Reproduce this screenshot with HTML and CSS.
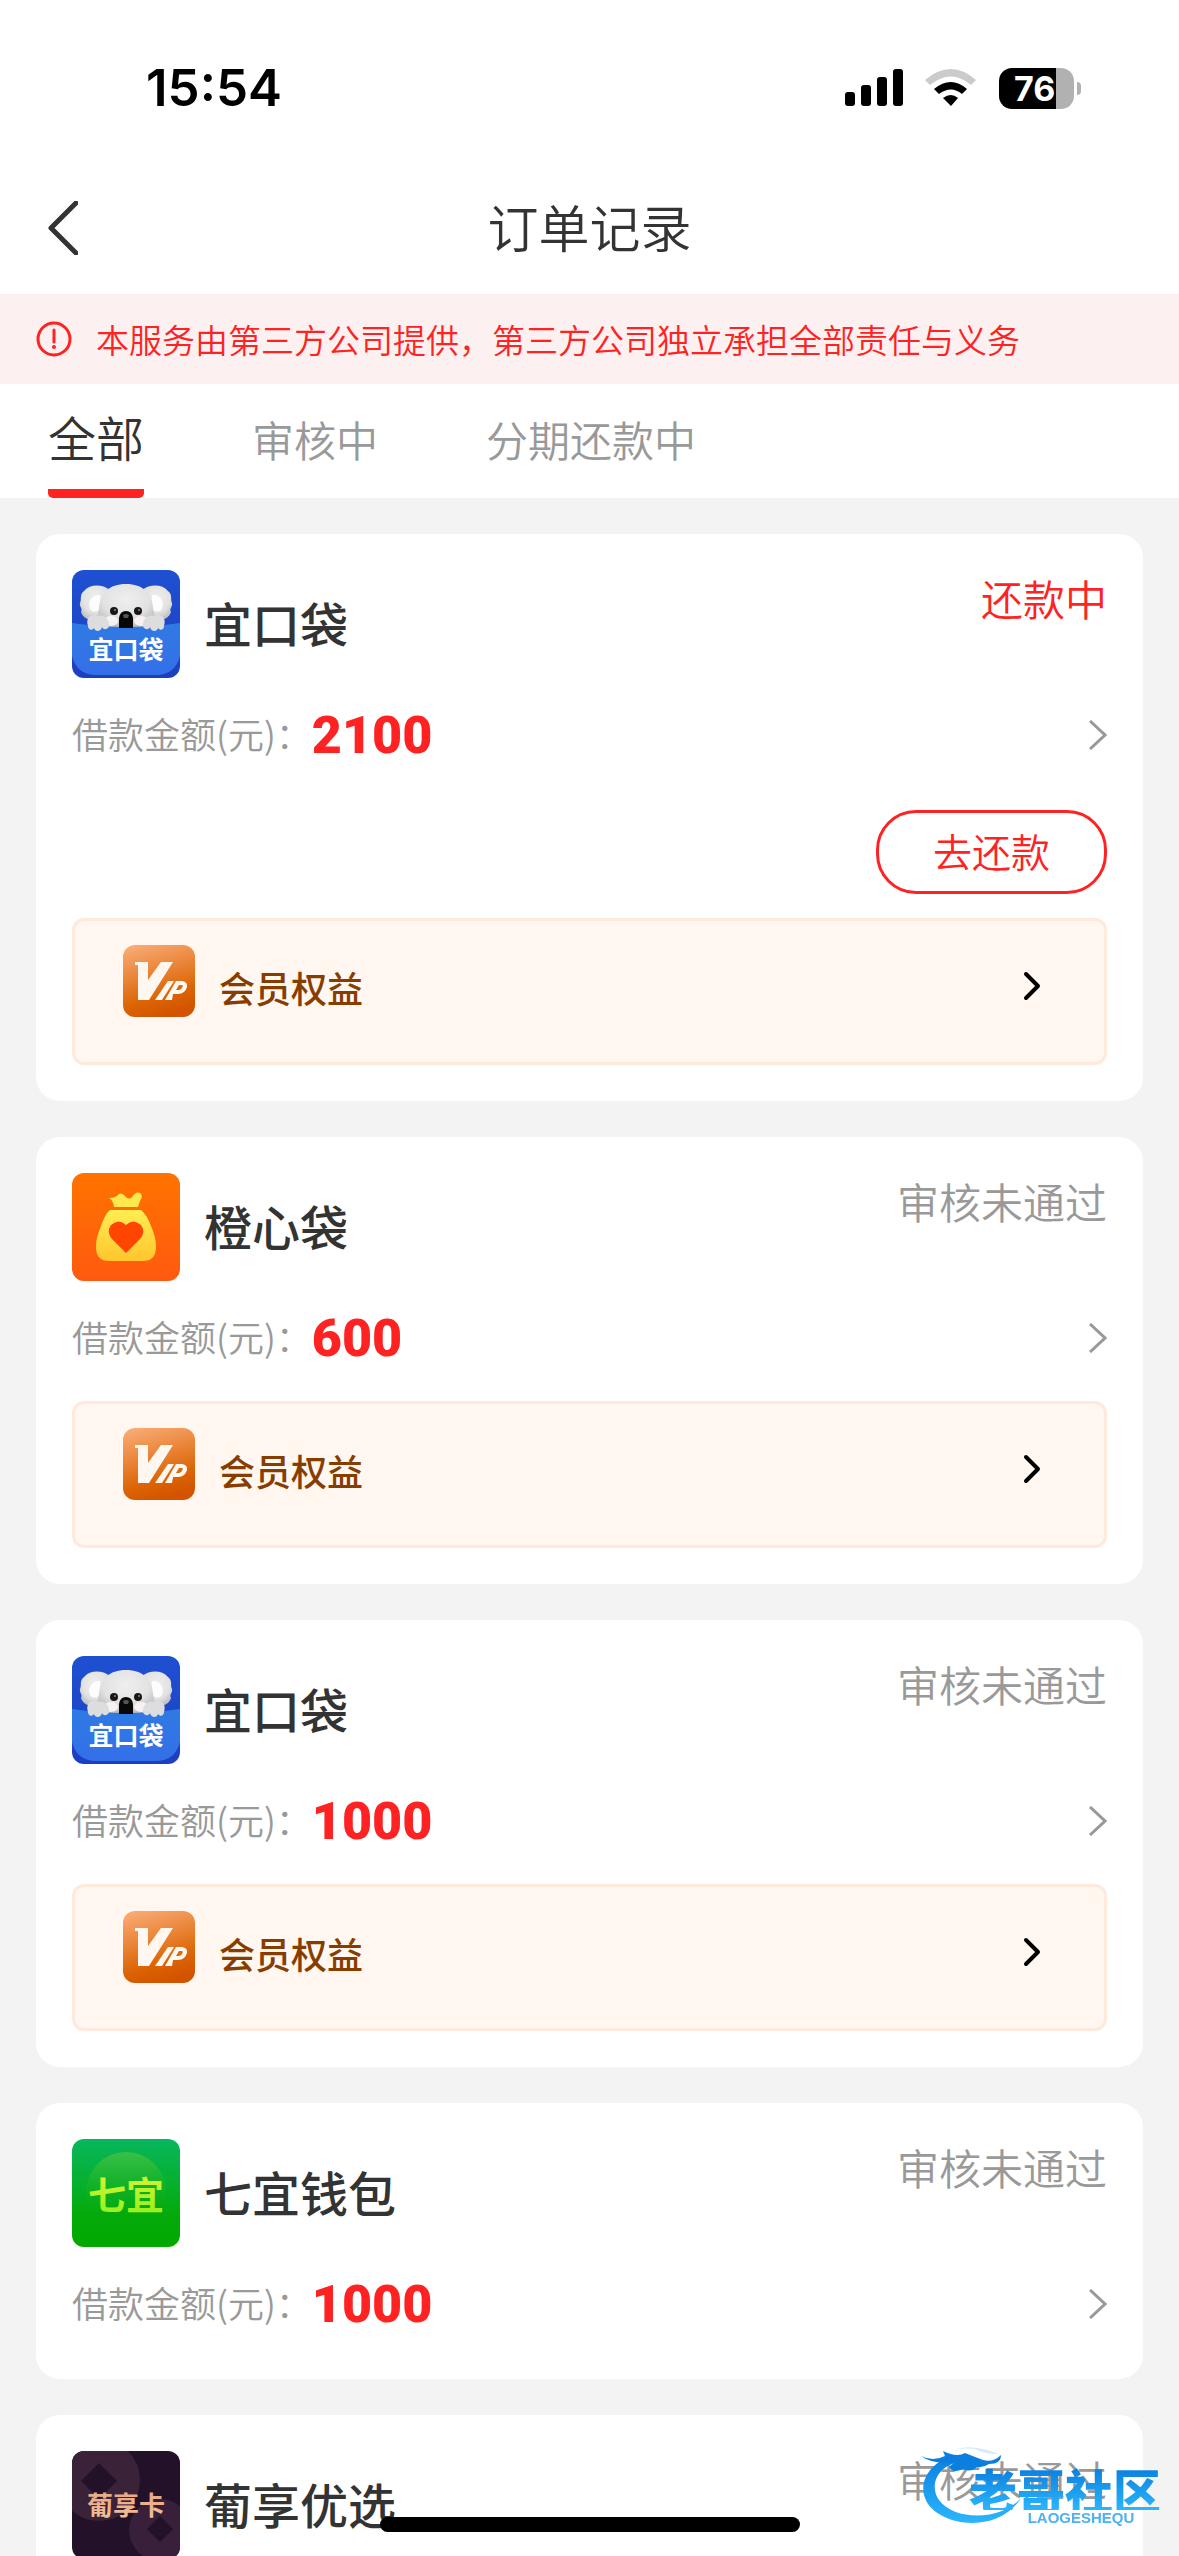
FILE: index.html
```html
<!DOCTYPE html>
<html lang="zh-CN">
<head>
    <meta charset="UTF-8">
    <meta name="viewport" content="width=device-width, initial-scale=1.0">
    <title>订单记录</title>
    <link rel="stylesheet" href="styles.css">
</head>
<body>

    <!-- Shared icons -->
    <svg class="sprite" width="0" height="0" aria-hidden="true">
        <defs>
            <linearGradient id="koalaBg" x1="0" y1="0" x2="0" y2="1">
                <stop offset="0" stop-color="#1f50d2"/>
                <stop offset="1" stop-color="#1c3fc0"/>
            </linearGradient>
            <linearGradient id="pocket" x1="0" y1="0" x2="0" y2="1">
                <stop offset="0" stop-color="#2f7ae4"/>
                <stop offset="1" stop-color="#346fe8"/>
            </linearGradient>
            <radialGradient id="fur" cx="0.5" cy="0.35" r="0.65">
                <stop offset="0" stop-color="#efefef"/>
                <stop offset="0.65" stop-color="#e2e2e2"/>
                <stop offset="1" stop-color="#bdbdbf"/>
            </radialGradient>
            <linearGradient id="vipBg" x1="0.2" y1="0" x2="0.5" y2="1">
                <stop offset="0" stop-color="#f9aa74"/>
                <stop offset="0.75" stop-color="#dc6403"/>
                <stop offset="1" stop-color="#d35400"/>
            </linearGradient>
            <linearGradient id="orangeBg" x1="0" y1="0" x2="0" y2="1">
                <stop offset="0" stop-color="#ff7300"/>
                <stop offset="1" stop-color="#ff5a10"/>
            </linearGradient>
            <linearGradient id="bag" x1="0" y1="0" x2="0" y2="1">
                <stop offset="0" stop-color="#ffee52"/>
                <stop offset="1" stop-color="#ffc52e"/>
            </linearGradient>
            <linearGradient id="greenBg" x1="0" y1="0" x2="0" y2="1">
                <stop offset="0" stop-color="#08b75e"/>
                <stop offset="0.7" stop-color="#04aa0a"/>
                <stop offset="1" stop-color="#03a800"/>
            </linearGradient>
            <linearGradient id="greenDisc" x1="0" y1="0" x2="0" y2="1">
                <stop offset="0" stop-color="#3bc047"/>
                <stop offset="0.8" stop-color="#08ab08" stop-opacity="0"/>
            </linearGradient>
            <linearGradient id="lime" x1="0" y1="0" x2="0" y2="1">
                <stop offset="0" stop-color="#e6f53a"/>
                <stop offset="1" stop-color="#8cf018"/>
            </linearGradient>
            <linearGradient id="gold" x1="0" y1="0" x2="0" y2="1">
                <stop offset="0" stop-color="#e5a183"/>
                <stop offset="1" stop-color="#f3c295"/>
            </linearGradient>
            <linearGradient id="brand" x1="0" y1="0" x2="0" y2="1">
                <stop offset="0" stop-color="#0a7fe0"/>
                <stop offset="1" stop-color="#2bb6fb"/>
            </linearGradient>
        </defs>

        <symbol id="logo-koala" viewBox="0 0 108 108">
            <rect width="108" height="108" fill="url(#koalaBg)"/>
            <g fill="url(#fur)">
                <path d="M38 20C30 14 18 14 12 21C7 25 10 29 8 33C7 37 11 38 9 42C11 49 20 52 30 50Z"/>
                <path d="M70 20C78 14 90 14 96 21C101 25 98 29 100 33C101 37 97 38 99 42C97 49 88 52 78 50Z"/>
            </g>
            <path d="M28 25C20 24 15 32 18 39C21 43 26 42 29 38ZM80 25C88 24 93 32 90 39C87 43 82 42 79 38Z" fill="#fdfdfd"/>
            <path d="M54 14C37 14 28 23 27 38C25 46 27 53 31 57H77C81 53 83 46 81 38C80 23 71 14 54 14Z" fill="url(#fur)"/>
            <ellipse cx="39" cy="51" rx="7" ry="5" fill="#f7f2ef"/>
            <ellipse cx="69" cy="51" rx="7" ry="5" fill="#f7f2ef"/>
            <path d="M0 53Q54 61 108 53V86Q103 105 84 105H24Q5 105 0 86Z" fill="url(#pocket)"/>
            <path d="M47 58V48Q48 41 54 41Q60 41 61 48V58Z" fill="#080808"/>
            <path d="M51 45Q54 43 57 45L56 48H52Z" fill="#555"/>
            <circle cx="42" cy="41" r="4" fill="#171717"/>
            <circle cx="66" cy="41" r="4" fill="#171717"/>
            <circle cx="43" cy="40" r="1" fill="#888"/>
            <circle cx="67" cy="40" r="1" fill="#888"/>
            <path d="M16 56C13 47 20 43 26 46C31 44 38 49 37 56C36 60 31 60 30 57C29 62 23 62 22 58C20 61 16 60 16 56Z" fill="#dddde0"/>
            <path d="M92 56C95 47 88 43 82 46C77 44 70 49 71 56C72 60 77 60 78 57C79 62 85 62 86 58C88 61 92 60 92 56Z" fill="#dddde0"/>
            <text x="54" y="89" text-anchor="middle" class="logo-text logo-text-koala">宜口袋</text>
        </symbol>

        <symbol id="logo-orange" viewBox="0 0 108 108">
            <rect width="108" height="108" fill="url(#orangeBg)"/>
            <path d="M37 25Q44 25 47 21Q50 19 54 24Q57 27 60 24Q64 18 68 20Q71 22 69 26Q67 30 66 34H42Q41 27 37 25Z" fill="#ffe84e"/>
            <path d="M38 37H69Q75 42 79 53Q84 64 84 74Q84 88 71 88H37Q24 88 24 74Q24 64 29 53Q33 41 38 37Z" fill="url(#bag)"/>
            <path d="M54 80L40 66Q34 59 39 52Q47 45 54 52Q61 45 69 52Q74 59 68 66Z" fill="#ff4500"/>
        </symbol>

        <symbol id="logo-green" viewBox="0 0 108 108">
            <rect width="108" height="108" fill="url(#greenBg)"/>
            <circle cx="54" cy="53" r="40" fill="url(#greenDisc)"/>
            <text x="54" y="70" text-anchor="middle" class="logo-text logo-text-green">七宜</text>
        </symbol>

        <symbol id="logo-grape" viewBox="0 0 108 108">
            <rect width="108" height="108" fill="#221129"/>
            <circle cx="27" cy="29" r="41" fill="#3a2239"/>
            <circle cx="88" cy="79" r="31" fill="#38203a"/>
            <path d="M27 12L45 30L27 48L9 30Z" fill="#221129"/>
            <path d="M88 65L101 78L88 91L75 78Z" fill="#221129"/>
            <text x="54" y="64" text-anchor="middle" class="logo-text logo-text-grape">葡享卡</text>
        </symbol>

        <symbol id="icon-vip" viewBox="0 0 72 72">
            <rect width="72" height="72" rx="12" fill="url(#vipBg)"/>
            <path d="M12 17H25V35L38 17H50L26 55H15V20H12Z" fill="#fff7f0"/>
            <path d="M45 36H51L39 55H32Z" fill="#fff7f0"/>
            <path fill-rule="evenodd" d="M53 36H59Q65 37 64 42Q62 49 55 49H50L49 55H42ZM56 40L53 45H56Q59 44 60 41Q60 40 58 40Z" fill="#fff7f0"/>
        </symbol>

        <symbol id="icon-arrow" viewBox="0 0 18 30">
            <path d="M1 1L16 15L1 29" fill="none" stroke="currentColor" stroke-width="3"/>
        </symbol>

        <symbol id="icon-arrow-bold" viewBox="0 0 18 30">
            <path d="M3 3L15 15L3 27" fill="none" stroke="currentColor" stroke-width="4" stroke-linecap="round" stroke-linejoin="round"/>
        </symbol>
    </svg>

    <div class="app">
        <div class="status-bar">
            <span class="time">15:54</span>
            <div class="status-icons">
                <svg width="58" height="38" viewBox="0 0 58 38">
                    <rect x="0" y="23" width="10" height="14" rx="3"/>
                    <rect x="16" y="16" width="10" height="21" rx="3"/>
                    <rect x="32" y="8" width="10" height="29" rx="3"/>
                    <rect x="48" y="0" width="10" height="37" rx="3"/>
                </svg>
                <svg width="52" height="38" viewBox="0 0 52 38">
                    <path d="M0 11Q26 -11 51 11L46 16Q26 -1 5 16Z" fill="#cbcbcb"/>
                    <path d="M9 20Q26 6 42 20L37 25Q26 16 14 25Z"/>
                    <path d="M18 29Q26 23 33 29L26 37Z"/>
                </svg>
                <div class="battery">
                    <span class="battery-level">76</span>
                    <span class="battery-tip"></span>
                </div>
            </div>
        </div>

        <header class="nav-bar">
            <button type="button" class="back-btn" aria-label="返回">
                <svg width="30" height="54" viewBox="0 0 30 54">
                    <path d="M28 2L3 27L28 52" fill="none" stroke="currentColor" stroke-width="5" stroke-linecap="round" stroke-linejoin="round"/>
                </svg>
            </button>
            <h1>订单记录</h1>
        </header>

        <div class="notice">
            <svg width="36" height="36" viewBox="0 0 36 36">
                <circle cx="18" cy="18" r="16" fill="none" stroke="currentColor" stroke-width="3"/>
                <path d="M18 9V21" stroke="currentColor" stroke-width="3" stroke-linecap="round"/>
                <circle cx="18" cy="26" r="2" fill="currentColor"/>
            </svg>
            <p>本服务由第三方公司提供，第三方公司独立承担全部责任与义务</p>
        </div>

        <nav class="tabs">
            <a href="#" class="tab active">全部</a>
            <a href="#" class="tab">审核中</a>
            <a href="#" class="tab">分期还款中</a>
        </nav>

        <main class="order-list">
            <section class="card">
                <div class="card-head">
                    <svg class="logo"><use href="#logo-koala"/></svg>
                    <h2>宜口袋</h2>
                    <span class="status repaying">还款中</span>
                </div>
                <div class="amount-row">
                    <span class="label">借款金额(元)：</span>
                    <strong class="amount">2100</strong>
                    <svg class="arrow"><use href="#icon-arrow"/></svg>
                </div>
                <div class="actions">
                    <button type="button" class="repay-btn">去还款</button>
                </div>
                <a href="#" class="vip">
                    <svg class="vip-icon"><use href="#icon-vip"/></svg>
                    <span>会员权益</span>
                    <svg class="arrow"><use href="#icon-arrow-bold"/></svg>
                </a>
            </section>

            <section class="card">
                <div class="card-head">
                    <svg class="logo"><use href="#logo-orange"/></svg>
                    <h2>橙心袋</h2>
                    <span class="status">审核未通过</span>
                </div>
                <div class="amount-row">
                    <span class="label">借款金额(元)：</span>
                    <strong class="amount">600</strong>
                    <svg class="arrow"><use href="#icon-arrow"/></svg>
                </div>
                <a href="#" class="vip">
                    <svg class="vip-icon"><use href="#icon-vip"/></svg>
                    <span>会员权益</span>
                    <svg class="arrow"><use href="#icon-arrow-bold"/></svg>
                </a>
            </section>

            <section class="card">
                <div class="card-head">
                    <svg class="logo"><use href="#logo-koala"/></svg>
                    <h2>宜口袋</h2>
                    <span class="status">审核未通过</span>
                </div>
                <div class="amount-row">
                    <span class="label">借款金额(元)：</span>
                    <strong class="amount">1000</strong>
                    <svg class="arrow"><use href="#icon-arrow"/></svg>
                </div>
                <a href="#" class="vip">
                    <svg class="vip-icon"><use href="#icon-vip"/></svg>
                    <span>会员权益</span>
                    <svg class="arrow"><use href="#icon-arrow-bold"/></svg>
                </a>
            </section>

            <section class="card">
                <div class="card-head">
                    <svg class="logo"><use href="#logo-green"/></svg>
                    <h2>七宜钱包</h2>
                    <span class="status">审核未通过</span>
                </div>
                <div class="amount-row">
                    <span class="label">借款金额(元)：</span>
                    <strong class="amount">1000</strong>
                    <svg class="arrow"><use href="#icon-arrow"/></svg>
                </div>
            </section>

            <section class="card">
                <div class="card-head">
                    <svg class="logo"><use href="#logo-grape"/></svg>
                    <h2>葡享优选</h2>
                    <span class="status">审核未通过</span>
                </div>
            </section>
        </main>
    </div>

    <!-- Community watermark -->
    <div class="watermark">
        <svg width="108" height="90" viewBox="0 0 108 90">
            <path d="M30 14C8 22 -2 40 4 56C14 84 76 94 100 56C82 78 34 80 18 58C8 44 16 24 38 20Z" fill="url(#brand)"/>
            <path d="M0 14Q12 20 24 14L22 9Q36 16 44 11Q54 15 62 18Q72 21 80 13Q80 22 68 22Q62 26 56 25Q50 31 42 27Q32 32 28 25L34 20Q12 23 0 14Z" fill="#0a7fe0"/>
            <path d="M36 7Q52 2 78 12Q62 12 54 7Q46 6 36 7Z" fill="#d5ecfc"/>
        </svg>
        <div class="watermark-text">
            <span class="watermark-name">老哥社区</span>
            <span class="watermark-sub">LAOGESHEQU</span>
        </div>
    </div>

    <div class="home-indicator"></div>

</body>
</html>
```

FILE: styles.css
```css
* {
    margin: 0;
    padding: 0;
    box-sizing: border-box;
}

body {
    font-family: "Noto Sans CJK SC", sans-serif;
    font-weight: 350;
    background-color: #f3f3f3;
    color: #333;
}

a {
    text-decoration: none;
    color: inherit;
}

button {
    font-family: inherit;
    font-weight: inherit;
    background: none;
    border: none;
    cursor: pointer;
}

svg {
    display: block;
    flex-shrink: 0;
}

.sprite {
    position: absolute;
}

.app {
    height: 100vh;
    display: flex;
    flex-direction: column;
    overflow: hidden;
}

/* Status bar */
.status-bar {
    background: #fff;
    height: 162px;
    padding: 14px 98px 0 146px;
    display: flex;
    align-items: center;
    justify-content: space-between;
    flex-shrink: 0;
    color: #000;
    font-family: Inter, sans-serif;
}

.time {
    font-size: 51px;
    font-weight: 600;
    line-height: 60px;
}

.status-icons {
    display: flex;
    align-items: center;
    gap: 22px;
}

.battery {
    display: flex;
    align-items: center;
    gap: 3px;
}

.battery-level {
    width: 75px;
    height: 41px;
    padding-left: 15px;
    border-radius: 13px;
    background: linear-gradient(to right, #000 76%, #b1b1b1 76%);
    color: #fff;
    font-size: 34px;
    font-weight: 700;
    line-height: 41px;
}

.battery-tip {
    width: 4px;
    height: 13px;
    border-radius: 0 4px 4px 0;
    background: #b1b1b1;
}

/* Header */
.nav-bar {
    background: #fff;
    height: 132px;
    padding: 0 48px;
    display: grid;
    grid-template-columns: 30px 1fr 30px;
    align-items: center;
    flex-shrink: 0;
}

.back-btn {
    color: #333;
}

.nav-bar h1 {
    padding-bottom: 4px;
    font-size: 51px;
    font-weight: 350;
    line-height: 72px;
    text-align: center;
}

.notice {
    background: #fcf1f0;
    color: #ff2222;
    height: 90px;
    padding: 0 36px;
    display: flex;
    align-items: center;
    gap: 24px;
    flex-shrink: 0;
    font-size: 33px;
    line-height: 48px;
}

/* Tabs */
.tabs {
    background: #fff;
    height: 114px;
    padding: 0 48px;
    display: flex;
    gap: 108px;
    flex-shrink: 0;
}

.tab {
    font-size: 42px;
    line-height: 110px;
    color: #999;
}

.tab.active {
    font-size: 48px;
    line-height: 104px;
    color: #333;
    border-bottom: 9px solid #ff2222;
    border-radius: 5px;
}

/* Orders */
.order-list {
    flex: 1;
    min-height: 0;
    padding: 36px;
    display: flex;
    flex-direction: column;
    gap: 36px;
    overflow-y: auto;
    scrollbar-width: none;
}

.card {
    background: #fff;
    border-radius: 24px;
    padding: 36px;
    flex-shrink: 0;
}

.card-head {
    display: flex;
    align-items: center;
    gap: 24px;
}

.logo {
    width: 108px;
    height: 108px;
    border-radius: 12px;
}

.card-head h2 {
    flex: 1;
    padding-bottom: 4px;
    font-size: 48px;
    font-weight: 500;
    line-height: 72px;
}

.status {
    align-self: flex-start;
    font-size: 42px;
    line-height: 56px;
    color: #999;
}

.status.repaying {
    color: #ff2222;
}

.amount-row {
    display: flex;
    align-items: center;
    height: 78px;
    margin-top: 18px;
}

.label {
    padding-bottom: 4px;
    font-size: 36px;
    color: #999;
}

.amount {
    flex: 1;
    font-family: Roboto, sans-serif;
    font-size: 52px;
    font-weight: 900;
    color: #ff2222;
}

.arrow {
    width: 18px;
    height: 30px;
    color: #999;
}

.actions {
    display: flex;
    justify-content: flex-end;
    margin-top: 36px;
}

.repay-btn {
    width: 231px;
    height: 84px;
    padding-bottom: 4px;
    border: 3px solid #ff2222;
    border-radius: 40px;
    color: #ff2222;
    font-size: 39px;
}

.vip {
    display: flex;
    align-items: flex-start;
    height: 147px;
    margin-top: 24px;
    padding: 24px 63px 0 48px;
    border: 3px solid #ffe9dc;
    border-radius: 12px;
    background: #fff7f0;
    color: #883d00;
    font-size: 36px;
    font-weight: 500;
    line-height: 84px;
}

.vip-icon {
    width: 72px;
    height: 72px;
}

.vip span {
    flex: 1;
    margin-left: 24px;
}

.vip .arrow {
    margin-top: 26px;
    color: #000;
}

/* Text inside the logos */
.logo-text {
    font-family: "Noto Sans CJK SC", sans-serif;
    font-weight: 700;
}

.logo-text-koala {
    font-size: 25px;
    fill: #fff;
}

.logo-text-green {
    font-size: 38px;
    fill: url(#lime);
}

.logo-text-grape {
    font-size: 26px;
    fill: url(#gold);
}

/* Overlays */
.watermark {
    position: fixed;
    right: 18px;
    bottom: 24px;
    display: flex;
}

.watermark-text {
    display: flex;
    flex-direction: column;
    align-items: center;
    margin-left: -60px;
    padding-top: 26px;
}

.watermark-name {
    font-size: 48px;
    font-weight: 900;
    line-height: 42px;
    background: linear-gradient(#0a7fe0, #2bb6fb);
    background-clip: text;
    color: transparent;
}

.watermark-sub {
    margin-left: 32px;
    font-family: "Liberation Sans", sans-serif;
    font-size: 15px;
    font-weight: 700;
    line-height: 15px;
    color: #4eb2f0;
}

.home-indicator {
    position: fixed;
    left: 50%;
    bottom: 24px;
    width: 420px;
    height: 15px;
    margin-left: -210px;
    border-radius: 8px;
    background: #000;
}
```
